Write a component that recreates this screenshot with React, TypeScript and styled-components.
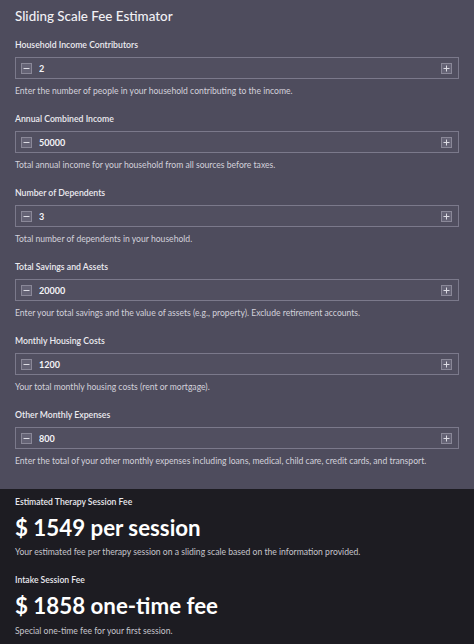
import { useState } from "react";
import styled, { createGlobalStyle } from "styled-components";

const GlobalStyle = createGlobalStyle`
  html, body {
    margin: 0;
    padding: 0;
    background: #1d1c22;
  }
  body {
    font-family: Lato, "Noto Sans", "Liberation Sans", sans-serif;
    -webkit-font-smoothing: antialiased;
  }
`;

// Layout
const Page = styled.div`
  width: 474px;
  min-height: 644px;
  display: flex;
  flex-direction: column;
`;

const FormPanel = styled.section`
  background: #4e4c5d;
  padding: 6px 15px 21px;
  display: flex;
  flex-direction: column;
`;

const Title = styled.h1`
  margin: 0 0 12px;
  font-size: 13.4px;
  line-height: 20px;
  font-weight: 500;
  color: #f2f1f5;
`;

const Field = styled.div`
  display: flex;
  flex-direction: column;
  & + & {
    margin-top: 14.5px;
  }
`;

const Label = styled.label`
  font-size: 8.7px;
  line-height: 14px;
  font-weight: 600;
  color: #ecebf0;
  margin-bottom: 5px;
`;

const InputBox = styled.div`
  height: 22px;
  box-sizing: border-box;
  border: 1px solid #7b798b;
  background: #514f60;
  display: flex;
  align-items: center;
  padding: 0 6px 0 5px;
  gap: 7px;
`;

const StepButton = styled.button`
  width: 11px;
  height: 11px;
  padding: 0;
  margin: 0;
  box-sizing: border-box;
  border: 1px solid #8a8898;
  background: #656375;
  color: #dddce4;
  display: flex;
  align-items: center;
  justify-content: center;
  cursor: pointer;
  flex-shrink: 0;
`;

const ValueInput = styled.input`
  flex: 1;
  min-width: 0;
  border: none;
  outline: none;
  background: transparent;
  color: #f4f3f7;
  font-family: inherit;
  font-size: 9px;
  font-weight: 700;
  padding: 0;
`;

const Help = styled.p<{ $dark?: boolean }>`
  margin: 5.5px 0 0;
  font-size: 8.6px;
  line-height: 13px;
  color: ${(p) => (p.$dark ? "#c6c5cc" : "#d3d1db")};
`;

const ResultPanel = styled.section`
  flex: 1;
  background: #1d1c22;
  padding: 6px 15px 14px;
  display: flex;
  flex-direction: column;
`;

const Result = styled.div`
  display: flex;
  flex-direction: column;
  & + & {
    margin-top: 14px;
  }
`;

const ResultLabel = styled.div`
  font-size: 8.6px;
  line-height: 14px;
  font-weight: 600;
  color: #e9e8ee;
  margin-bottom: 5px;
`;

const ResultValue = styled.div`
  font-size: 22.3px;
  line-height: 28px;
  font-weight: 700;
  color: #ffffff;
  margin-bottom: -1px;
`;

const MinusIcon = () => (
  <svg width="7" height="7" viewBox="0 0 7 7">
    <path d="M0.5 3.5h6" stroke="currentColor" strokeWidth="1" />
  </svg>
);

const PlusIcon = () => (
  <svg width="7" height="7" viewBox="0 0 7 7">
    <path d="M0.5 3.5h6M3.5 0.5v6" stroke="currentColor" strokeWidth="1" />
  </svg>
);

type FieldDef = {
  key: string;
  label: string;
  help: string;
  initial: number;
  step: number;
};

const FIELDS: FieldDef[] = [
  {
    key: "contributors",
    label: "Household Income Contributors",
    help: "Enter the number of people in your household contributing to the income.",
    initial: 2,
    step: 1,
  },
  {
    key: "income",
    label: "Annual Combined Income",
    help: "Total annual income for your household from all sources before taxes.",
    initial: 50000,
    step: 1000,
  },
  {
    key: "dependents",
    label: "Number of Dependents",
    help: "Total number of dependents in your household.",
    initial: 3,
    step: 1,
  },
  {
    key: "savings",
    label: "Total Savings and Assets",
    help: "Enter your total savings and the value of assets (e.g., property). Exclude retirement accounts.",
    initial: 20000,
    step: 1000,
  },
  {
    key: "housing",
    label: "Monthly Housing Costs",
    help: "Your total monthly housing costs (rent or mortgage).",
    initial: 1200,
    step: 100,
  },
  {
    key: "expenses",
    label: "Other Monthly Expenses",
    help: "Enter the total of your other monthly expenses including loans, medical, child care, credit cards, and transport.",
    initial: 800,
    step: 100,
  },
];

function NumberField({ def }: { def: FieldDef }) {
  const [value, setValue] = useState(def.initial);
  return (
    <Field>
      <Label htmlFor={def.key}>{def.label}</Label>
      <InputBox>
        <StepButton
          aria-label="decrease"
          onClick={() => setValue((v) => Math.max(0, v - def.step))}
        >
          <MinusIcon />
        </StepButton>
        <ValueInput
          id={def.key}
          value={value}
          onChange={(e) => setValue(Number(e.target.value) || 0)}
        />
        <StepButton aria-label="increase" onClick={() => setValue((v) => v + def.step)}>
          <PlusIcon />
        </StepButton>
      </InputBox>
      <Help>{def.help}</Help>
    </Field>
  );
}

export default function App() {
  return (
    <>
      <GlobalStyle />
      <Page>
        <FormPanel>
          <Title>Sliding Scale Fee Estimator</Title>
          {FIELDS.map((f) => (
            <NumberField key={f.key} def={f} />
          ))}
        </FormPanel>
        <ResultPanel>
          <Result>
            <ResultLabel>Estimated Therapy Session Fee</ResultLabel>
            <ResultValue>$ 1549 per session</ResultValue>
            <Help $dark>
              Your estimated fee per therapy session on a sliding scale based on the information
              provided.
            </Help>
          </Result>
          <Result>
            <ResultLabel>Intake Session Fee</ResultLabel>
            <ResultValue>$ 1858 one-time fee</ResultValue>
            <Help $dark>Special one-time fee for your first session.</Help>
          </Result>
        </ResultPanel>
      </Page>
    </>
  );
}
